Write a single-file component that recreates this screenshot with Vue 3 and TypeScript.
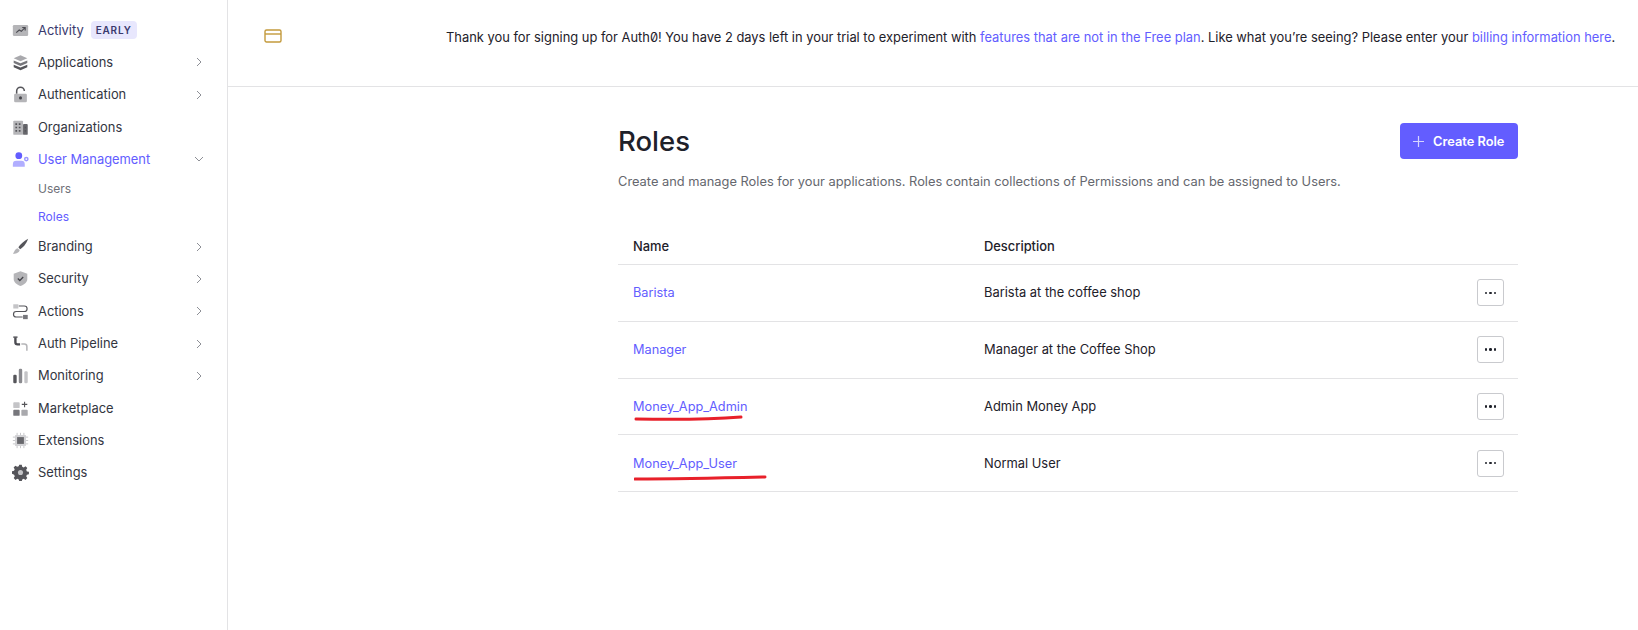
<script setup lang="ts">
import { ref } from 'vue'

interface NavItem {
  label: string
  icon: string
  arrow?: 'right' | 'down'
  active?: boolean
  badge?: string
  dark?: boolean
  children?: { label: string; active?: boolean }[]
}

const nav = ref<NavItem[]>([
  { label: 'Activity', icon: 'activity', badge: 'EARLY', dark: true },
  { label: 'Applications', icon: 'apps', arrow: 'right' },
  { label: 'Authentication', icon: 'lock', arrow: 'right' },
  { label: 'Organizations', icon: 'org' },
  {
    label: 'User Management',
    icon: 'users',
    arrow: 'down',
    active: true,
    children: [{ label: 'Users' }, { label: 'Roles', active: true }],
  },
  { label: 'Branding', icon: 'brush', arrow: 'right' },
  { label: 'Security', icon: 'shield', arrow: 'right' },
  { label: 'Actions', icon: 'actions', arrow: 'right' },
  { label: 'Auth Pipeline', icon: 'pipe', arrow: 'right' },
  { label: 'Monitoring', icon: 'bars', arrow: 'right' },
  { label: 'Marketplace', icon: 'market' },
  { label: 'Extensions', icon: 'chip' },
  { label: 'Settings', icon: 'gear' },
])

const roles = [
  { name: 'Barista', desc: 'Barista at the coffee shop', mark: '' },
  { name: 'Manager', desc: 'Manager at the Coffee Shop', mark: '' },
  { name: 'Money_App_Admin', desc: 'Admin Money App', mark: 'M2 5 C30 5.5 75 5.500 107 3' },
  { name: 'Money_App_User', desc: 'Normal User', mark: 'M1 8 C50 8 90 7 131 6' },
]
</script>

<template>
  <div class="page">
    <aside class="sidebar">
      <template v-for="item in nav" :key="item.label">
        <div class="navRow" :class="{ active: item.active, dark: item.dark }">
          <svg class="navIcon" viewBox="0 0 20 20">
            <template v-if="item.icon === 'activity'">
              <rect x="1" y="3.500" width="18" height="13" rx="1.500" fill="#b5b5b8" />
              <path d="M5 12.500l3.500-3 2.500 1.500 4-4M12 6.500h3.500V10" fill="none" stroke="#4c4c52" stroke-width="1.400" />
            </template>
            <template v-else-if="item.icon === 'apps'">
              <path d="M10 1.500l8 3.500-8 3.500L2 5z" fill="#a9a9ad" />
              <path d="M2 7.500l8 3.500 8-3.500v3L10 14l-8-3.500z" fill="#77777c" />
              <path d="M2 12.500L10 16l8-3.500v3L10 19l-8-3.500z" fill="#55555a" />
            </template>
            <template v-else-if="item.icon === 'lock'">
              <path d="M5.500 9V6a4.500 4.500 0 0 1 9 0" fill="none" stroke="#55555a" stroke-width="1.800" />
              <rect x="2.500" y="9" width="15" height="10" rx="1.500" fill="#b5b5b8" />
              <circle cx="10" cy="14" r="1.800" fill="#44444a" />
            </template>
            <template v-else-if="item.icon === 'org'">
              <rect x="1.500" y="2" width="11.500" height="16.500" rx="1" fill="#b5b5b8" />
              <rect x="13" y="6" width="5.500" height="12.500" rx="1" fill="#66666b" />
              <path d="M4 5h2v2H4zM8 5h2v2H8zM4 9h2v2H4zM8 9h2v2H8zM4 13h2v2H4zM8 13h2v2H8zM15 9h1.500v2H15zM15 13h1.500v2H15z" fill="#55555a" />
            </template>
            <template v-else-if="item.icon === 'users'">
              <circle cx="8" cy="5.500" r="4" fill="#635dff" />
              <path d="M1 18.500v-3a4 4 0 0 1 4-4h6a4 4 0 0 1 4 4v3z" fill="#b1aeff" />
              <circle cx="16.800" cy="9.500" r="2.800" fill="#9d99ff" />
              <circle cx="16.800" cy="9.500" r="1" fill="#fff" />
            </template>
            <template v-else-if="item.icon === 'brush'">
              <path d="M19 1C14.500 3.500 9.500 7.500 7.500 11l2 2.200C13 11.500 17 6.500 19 1z" fill="#55555a" />
              <path d="M6.500 12c-2 .5-3 2-3.700 3.700-.4 1-1.100 1.900-1.800 2.800 3.500.3 7.500-.8 8-4.300z" fill="#b5b5b8" />
            </template>
            <template v-else-if="item.icon === 'shield'">
              <path d="M10 1.500l8 2.800v6.200c0 3.800-3.500 6.500-8 8.200-4.500-1.700-8-4.400-8-8.200V4.300z" fill="#b5b5b8" />
              <path d="M6.800 10l2.400 2.400 4-4.200" fill="none" stroke="#44444a" stroke-width="1.500" />
            </template>
            <template v-else-if="item.icon === 'actions'">
              <rect x="1.500" y="1.500" width="6" height="5" fill="#c4c4c7" />
              <rect x="13" y="14" width="5.500" height="5" fill="#77777c" />
              <path d="M8 3.500h6.500a3 3 0 0 1 0 6.500H5a3.200 3.200 0 0 0 0 6.500h7.500" fill="none" stroke="#55555a" stroke-width="1.400" />
            </template>
            <template v-else-if="item.icon === 'pipe'">
              <path d="M4 3v5.500a2.500 2.500 0 0 0 2.500 2.500h3" fill="none" stroke="#4c4c52" stroke-width="2.800" />
              <path d="M11 10.500h3.500a3 3 0 0 1 3 3v5" fill="none" stroke="#b5b5b8" stroke-width="1.800" />
              <path d="M1.500 2.500h5" stroke="#4c4c52" stroke-width="1.600" />
            </template>
            <template v-else-if="item.icon === 'bars'">
              <rect x="1.500" y="9" width="4" height="10" rx="1.500" fill="#55555a" />
              <rect x="8" y="2" width="4" height="17" rx="1.500" fill="#8a8a8f" />
              <rect x="14.500" y="5" width="4" height="14" rx="1.500" fill="#c4c4c7" />
            </template>
            <template v-else-if="item.icon === 'market'">
              <rect x="1.500" y="2.500" width="7.500" height="7" rx="1" fill="#c4c4c7" />
              <rect x="1.500" y="11.500" width="7.500" height="7" rx="1" fill="#77777c" />
              <rect x="11" y="11.500" width="7.500" height="7" rx="1" fill="#a9a9ad" />
              <path d="M14.800 2v6.500M11.500 5.200h6.500" stroke="#55555a" stroke-width="1.300" />
            </template>
            <template v-else-if="item.icon === 'chip'">
              <path d="M6 1v18M10 1v18M14 1v18M1 6h18M1 10h18M1 14h18" stroke="#c4c4c7" stroke-width="1.100" />
              <rect x="3.500" y="3.500" width="13" height="13" rx="1" fill="#d2d2d5" />
              <rect x="6" y="6" width="8" height="8" fill="#66666b" />
            </template>
            <template v-else>
              <path d="M8.500 .8h3l.5 2.400 1.800.8 2.100-1.300 2.100 2.100-1.300 2.100.8 1.800 2.400.5v3l-2.400.5-.8 1.800 1.300 2.100-2.100 2.100-2.100-1.300-1.800.8-.5 2.400h-3l-.5-2.400-1.800-.8-2.100 1.300-2.100-2.100 1.300-2.100-.8-1.800L0 11.500v-3l2.400-.5.800-1.800L1.900 4.100 4 2l2.100 1.300 1.800-.8z" fill="#55555a" />
              <circle cx="10" cy="10" r="3" fill="#c4c4c7" />
            </template>
          </svg>
          <span class="navLabel">{{ item.label }}</span>
          <span v-if="item.badge" class="badge">{{ item.badge }}</span>
          <svg v-if="item.arrow" class="arrow" viewBox="0 0 10 10" width="10" height="10">
            <path v-if="item.arrow === 'right'" d="M3 1l4 4-4 4" />
            <path v-else d="M1 3l4 4 4-4" />
          </svg>
        </div>
        <div v-for="child in item.children" :key="child.label" class="subRow" :class="{ active: child.active }">
          {{ child.label }}
        </div>
      </template>
    </aside>

    <main class="main">
      <div class="banner">
        <svg class="cardIcon" viewBox="0 0 18 16" width="18" height="16">
          <rect x="1" y="2" width="16" height="12" rx="1.500" />
          <path d="M1 6h16" />
        </svg>
        <p class="bannerText">
          Thank you for signing up for Auth0! You have 2 days left in your trial to experiment with
          <a>features that are not in the Free plan</a>. Like what you’re seeing? Please enter your
          <a>billing information here</a>.
        </p>
      </div>

      <section class="content">
        <div class="titleRow">
          <h1>Roles</h1>
          <button class="createBtn">
            <svg viewBox="0 0 11 11" width="11" height="11"><path d="M5.500 0v11M0 5.500h11" /></svg>
            Create Role
          </button>
        </div>
        <p class="intro">
          Create and manage Roles for your applications. Roles contain collections of Permissions and can be assigned to Users.
        </p>

        <div class="table">
          <div class="tr head">
            <div>Name</div>
            <div>Description</div>
          </div>
          <div v-for="r in roles" :key="r.name" class="tr">
            <div class="nameCell">
              <a>{{ r.name }}</a>
              <svg v-if="r.mark" class="mark" viewBox="0 0 135 11" width="135" height="11">
                <path :d="r.mark" />
              </svg>
            </div>
            <div>{{ r.desc }}</div>
            <button class="moreBtn"><i></i><i></i><i></i></button>
          </div>
        </div>
      </section>
    </main>
  </div>
</template>

<style>
body {
  background: #fff;
}
</style>

<style scoped>
.page {
  display: flex;
  height: 630px;
  overflow: hidden;
  font-family: Inter, "Noto Sans", sans-serif;
  font-size: 13px;
  color: #1e212a;
}
.sidebar {
  width: 228px;
  flex: none;
  box-sizing: border-box;
  border-right: 1px solid #e3e3e5;
  padding: 14px 0 0 12px;
}
.navRow {
  display: flex;
  align-items: center;
  height: 32.300px;
  color: #33363f;
}
.navRow.active {
  color: #635dff;
}
.navRow.dark {
  color: #3a3a6e;
}
.navIcon {
  width: 17px;
  height: 17px;
  flex: none;
  margin-right: 9px;
}
.navLabel {
  font-size: 12.900px;
}
.badge {
  margin-left: 7px;
  padding: 0 5px;
  height: 18px;
  line-height: 18px;
  border-radius: 4px;
  background: #e8e7fd;
  color: #3a3a6e;
  font-size: 10px;
  font-weight: 600;
  letter-spacing: 0.8px;
}
.arrow {
  margin-left: auto;
  margin-right: 23px;
  fill: none;
  stroke: #8d8f96;
  stroke-width: 1;
}
.subRow {
  height: 27.500px;
  line-height: 27.500px;
  padding-left: 26px;
  font-size: 12px;
  color: #6f7178;
}
.subRow.active {
  color: #635dff;
}
.main {
  flex: 1;
  min-width: 0;
}
.banner {
  display: flex;
  justify-content: space-between;
  height: 87px;
  box-sizing: border-box;
  border-bottom: 1px solid #e3e3e5;
  padding: 28px 25px 0 36px;
}
.cardIcon {
  fill: none;
  stroke: #c39a3c;
  stroke-width: 1.400;
}
.bannerText {
  margin: 0;
  width: 1167px;
  line-height: 20px;
  font-size: 12.900px;
  font-feature-settings: "zero";
  white-space: nowrap;
  color: #1e212a;
}
a {
  color: #635dff;
}
.content {
  width: 900px;
  margin-left: 390px;
}
.titleRow {
  display: flex;
  justify-content: space-between;
  align-items: center;
  margin-top: 36px;
}
h1 {
  margin: 0;
  font-size: 27.500px;
  font-weight: 500;
  line-height: 36px;
  color: #1e212a;
}
.createBtn {
  display: flex;
  align-items: center;
  gap: 9px;
  height: 36px;
  width: 118px;
  padding: 0 0 0 13px;
  border: none;
  border-radius: 4px;
  background: #635dff;
  color: #fff;
  font-family: inherit;
  font-size: 12.800px;
  font-weight: 600;
}
.createBtn svg {
  flex: none;
  fill: none;
  stroke: #d6d4ff;
  stroke-width: 1.200;
}
.intro {
  margin: 12px 0 0;
  line-height: 22px;
  font-size: 12.850px;
  color: #65676e;
}
.table {
  margin-top: 36px;
}
.tr {
  position: relative;
  display: grid;
  grid-template-columns: 351px 1fr 41px;
  align-items: center;
  height: 56.750px;
  box-sizing: border-box;
  padding-left: 15px;
  border-bottom: 1px solid #e3e3e5;
  font-size: 12.900px;
}
.tr.head {
  height: 36px;
  font-weight: 500;
}
.nameCell {
  position: relative;
  font-size: 12.750px;
}
.mark {
  position: absolute;
  left: 1px;
  top: 15px;
  fill: none;
  stroke: #e8202a;
  stroke-width: 3;
  stroke-linecap: round;
}
.moreBtn {
  width: 27px;
  height: 27px;
  padding: 0;
  display: flex;
  align-items: center;
  justify-content: center;
  gap: 2px;
  background: #fff;
  border: 1px solid #c9cace;
  border-radius: 3px;
}
.moreBtn i {
  width: 2.500px;
  height: 2.500px;
  border-radius: 50%;
  background: #1e212a;
}
</style>
